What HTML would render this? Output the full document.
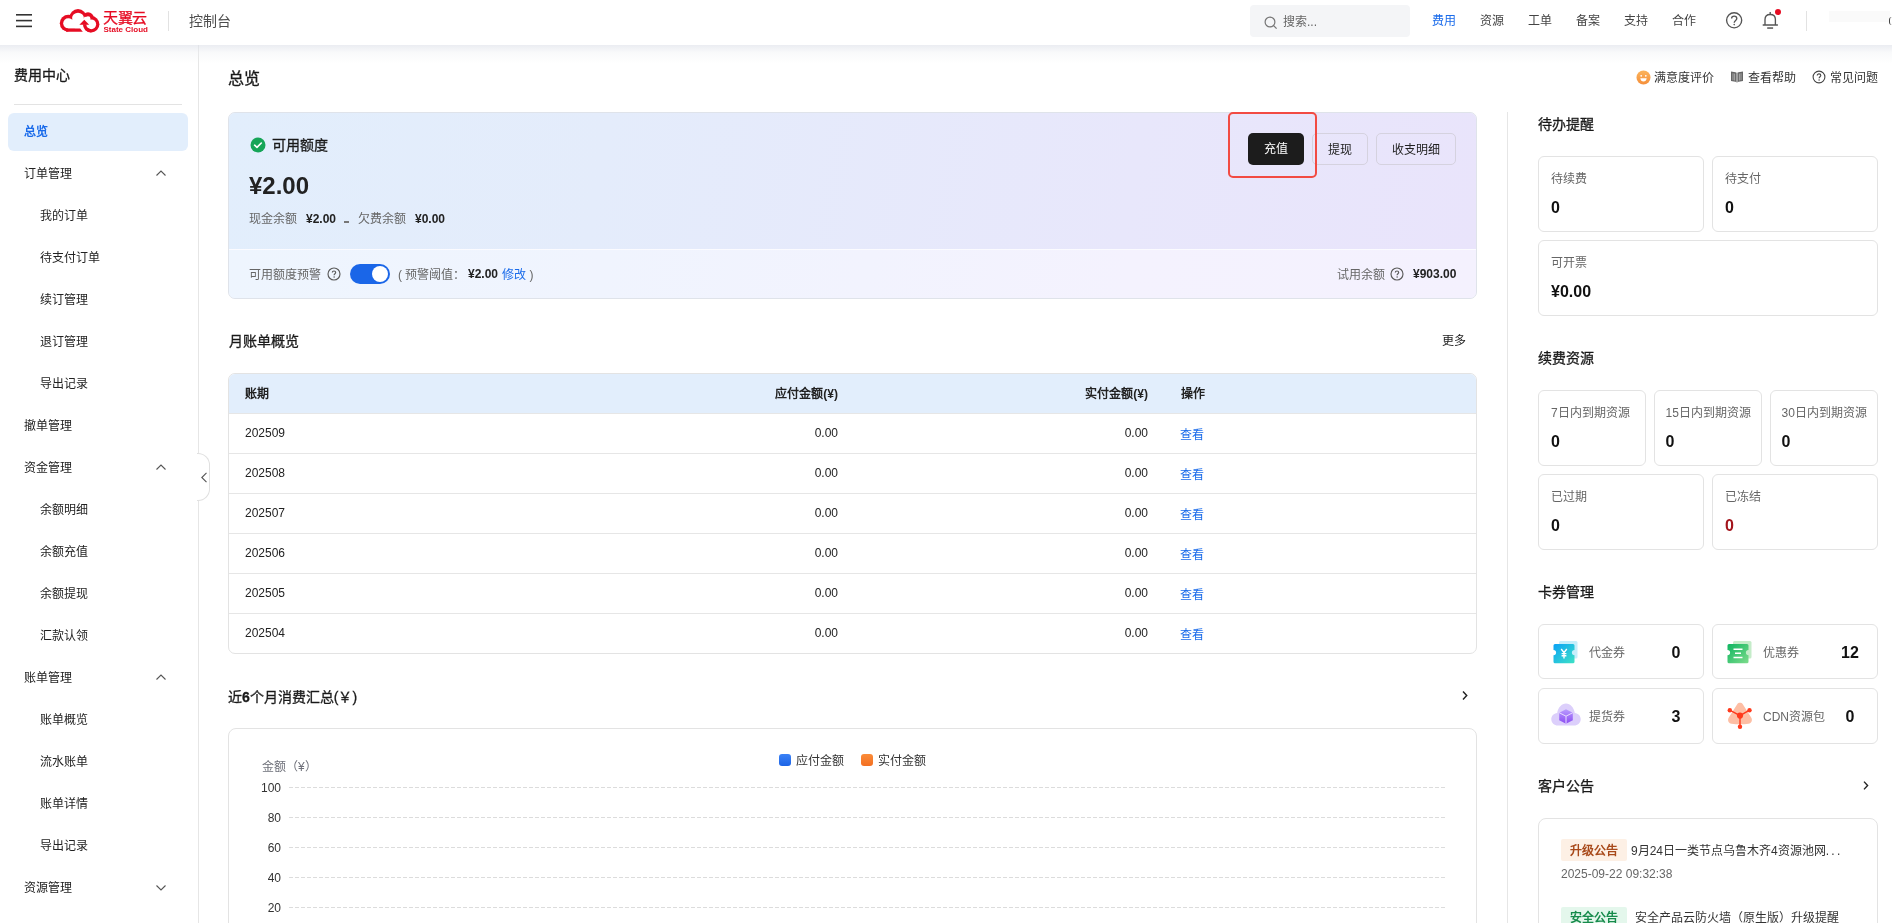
<!DOCTYPE html>
<html lang="zh-CN">
<head>
<meta charset="utf-8">
<style>
*{box-sizing:border-box;margin:0;padding:0}
html,body{width:1892px;height:923px;overflow:hidden;background:#fff}
body{will-change:transform}
body{font-family:"Liberation Sans",sans-serif;font-size:12px;color:#222;position:relative}
.a{position:absolute;white-space:nowrap}
.t{line-height:20px;height:20px}
.b{font-weight:bold}
/* header */
#hdr{position:absolute;left:0;top:0;width:1892px;height:45px;background:#fff;z-index:5}
#shd{position:absolute;left:0;top:45px;width:1892px;height:19px;background:linear-gradient(rgba(222,225,233,.62),rgba(236,238,242,.32) 40%,rgba(255,255,255,0));z-index:4}
.nav{color:#444;font-size:12px}
/* sidebar */
#side{position:absolute;left:0;top:45px;width:199px;height:878px;border-right:1px solid #e6e6e6;background:#fff}
.mi{position:absolute;left:24px;font-size:12px;color:#222;line-height:20px;height:20px}
.sub{left:40px}
.chev{position:absolute;left:156px;width:10px;height:6px}
/* main */
.h14{font-size:14px;font-weight:500;-webkit-text-stroke:0.3px #1a1a1a;color:#1a1a1a;line-height:20px;height:20px}
.card{position:absolute;border:1px solid #e3e3e3;border-radius:6px;background:#fff}
.lbl{color:#666;font-size:12px}
.num{font-size:16px;font-weight:bold;color:#111}
.row{position:absolute;left:0;width:1247px;height:40px;border-top:1px solid #e6e6e6}
.cell{position:absolute;line-height:20px;height:20px;top:9px;font-size:12px;color:#222}
.link{color:#1a6bea}
.grid{position:absolute;left:289px;width:1156px;height:1px;background-image:linear-gradient(to right,#dcdcdc 0,#dcdcdc 4px,transparent 4px,transparent 6px);background-size:6px 1px}
.yl{position:absolute;width:40px;text-align:right;left:241px;font-size:12px;color:#333;line-height:16px;height:16px}
</style>
</head>
<body>
<!-- HEADER -->
<div id="hdr">
  <svg class="a" style="left:16px;top:13px" width="16" height="15" viewBox="0 0 16 15">
    <rect x="0" y="1" width="16" height="1.6" fill="#333"/>
    <rect x="0" y="6.8" width="16" height="1.6" fill="#333"/>
    <rect x="0" y="12.6" width="16" height="1.6" fill="#333"/>
  </svg>
  <!-- logo -->
  <svg class="a" style="left:56px;top:6px" width="46" height="30" viewBox="56 6 46 30">
    <g fill="#e60c23">
      <circle cx="68.3" cy="23.3" r="8.5"/><circle cx="78" cy="17.8" r="8.7"/><circle cx="88" cy="18" r="5.8"/><circle cx="91.2" cy="24.3" r="8.2"/>
    </g>
    <g fill="#fff">
      <circle cx="68.3" cy="23.3" r="5.1"/><ellipse cx="78" cy="17.9" rx="5.9" ry="5.2"/><circle cx="88" cy="18.6" r="2.4"/><path d="M82 21 L84.6 16.8 L88.5 17.2 L90.5 19.6 L89 27 L80 27Z"/><circle cx="91.2" cy="24.3" r="4.9"/>
      <rect x="68.3" y="19.5" width="20" height="9"/>
      <rect x="68.3" y="28.4" width="16" height="6"/>
    </g>
    <path d="M66 28.4 H80.2 L82.8 31.8 H66Z" fill="#e60c23"/>
    <path d="M91.2 30.9 A6.6 6.6 0 0 1 84.6 24.3" fill="none" stroke="#e60c23" stroke-width="3.4"/>
    <path d="M79.4 24.8 L84.3 19.8 L89.2 24.8Z" fill="#e60c23"/>
  </svg>
  <div class="a" style="left:103px;top:8px;font-size:15px;line-height:20px;color:#e60c23;font-weight:500;-webkit-text-stroke:0.25px #e60c23;letter-spacing:-0.3px">天翼云</div>
  <div class="a" style="left:103.5px;top:26px;font-size:8px;line-height:8px;color:#e60c23;font-weight:bold">State Cloud</div>
  <div class="a" style="left:168px;top:11px;width:1px;height:20px;background:#e2e2e2"></div>
  <div class="a" style="left:189px;top:11px;font-size:14px;line-height:20px;color:#4d4d4d">控制台</div>

  <div class="a" style="left:1250px;top:5px;width:160px;height:32px;background:#f4f5f7;border-radius:4px"></div>
  <svg class="a" style="left:1263.5px;top:15.5px" width="14" height="14" viewBox="0 0 14 14"><circle cx="6" cy="6" r="4.9" fill="none" stroke="#777" stroke-width="1.2"/><path d="M9.6 9.6 L12.6 12.6" stroke="#777" stroke-width="1.3"/></svg>
  <div class="a nav t" style="left:1283px;top:12px;color:#666">搜索...</div>

  <div class="a nav t" style="left:1432px;top:11px;color:#1a6bea">费用</div>
  <div class="a nav t" style="left:1480px;top:11px">资源</div>
  <div class="a nav t" style="left:1528px;top:11px">工单</div>
  <div class="a nav t" style="left:1576px;top:11px">备案</div>
  <div class="a nav t" style="left:1624px;top:11px">支持</div>
  <div class="a nav t" style="left:1672px;top:11px">合作</div>
  <svg class="a" style="left:1720px;top:4px" width="70" height="32" viewBox="1720 4 70 32">
    <g fill="none" stroke="#555" stroke-width="1.35">
      <circle cx="1734.15" cy="20.3" r="7.55"/>
      <path d="M1731.6 18.6 C1731.6 17 1732.7 16.1 1734.2 16.1 C1735.7 16.1 1736.8 17.1 1736.8 18.4 C1736.8 20.4 1734.2 20.5 1734.2 22.8"/>
      <path d="M1765 25 V19.6 C1765 16.3 1767.3 14.5 1770.2 14.5 C1773.1 14.5 1775.4 16.3 1775.4 19.6 V25"/>
      <path d="M1762.7 25 H1777.9" stroke-width="1.5"/>
      <path d="M1770.2 12 V14.4"/>
      <path d="M1767.2 28.05 H1773.1" stroke-width="1.5"/>
    </g>
    <circle cx="1734.2" cy="24.6" r="0.8" fill="#555"/>
    <circle cx="1778" cy="12" r="3" fill="#e60c23"/>
  </svg>
  <div class="a" style="left:1806px;top:11px;width:1px;height:20px;background:#e2e2e2"></div>
  <div class="a" style="left:1829px;top:11px;width:61px;height:11px;background:#fafafa"></div>
  <div class="a" style="left:1889px;top:17px;width:3px;height:8px;border-left:1.5px solid #444;border-radius:3px 0 0 3px"></div>
</div>

<div id="shd"></div>
<!-- SIDEBAR -->
<div id="side">
  <div class="a" style="left:14px;top:20px;font-size:14px;font-weight:500;-webkit-text-stroke:0.3px #1a1a1a;line-height:20px;color:#1a1a1a">费用中心</div>
  <div class="a" style="left:14px;top:59px;width:168px;height:1px;background:#e3e3e3"></div>
  <div class="a" style="left:8px;top:68px;width:180px;height:38px;background:#e2eefc;border-radius:6px"></div>
  <div class="mi b" style="top:77px;color:#1a6bea">总览</div>
  <div class="mi" style="top:119px">订单管理</div>
  <div class="mi sub" style="top:161px">我的订单</div>
  <div class="mi sub" style="top:203px">待支付订单</div>
  <div class="mi sub" style="top:245px">续订管理</div>
  <div class="mi sub" style="top:287px">退订管理</div>
  <div class="mi sub" style="top:329px">导出记录</div>
  <div class="mi" style="top:371px">撤单管理</div>
  <div class="mi" style="top:413px">资金管理</div>
  <div class="mi sub" style="top:455px">余额明细</div>
  <div class="mi sub" style="top:497px">余额充值</div>
  <div class="mi sub" style="top:539px">余额提现</div>
  <div class="mi sub" style="top:581px">汇款认领</div>
  <div class="mi" style="top:623px">账单管理</div>
  <div class="mi sub" style="top:665px">账单概览</div>
  <div class="mi sub" style="top:707px">流水账单</div>
  <div class="mi sub" style="top:749px">账单详情</div>
  <div class="mi sub" style="top:791px">导出记录</div>
  <div class="mi" style="top:833px">资源管理</div>
  <svg class="chev" style="top:125px" viewBox="0 0 10 6"><path d="M0.5 5.5 L5 1 L9.5 5.5" fill="none" stroke="#555" stroke-width="1.1"/></svg>
  <svg class="chev" style="top:419px" viewBox="0 0 10 6"><path d="M0.5 5.5 L5 1 L9.5 5.5" fill="none" stroke="#555" stroke-width="1.1"/></svg>
  <svg class="chev" style="top:629px" viewBox="0 0 10 6"><path d="M0.5 5.5 L5 1 L9.5 5.5" fill="none" stroke="#555" stroke-width="1.1"/></svg>
  <svg class="chev" style="top:840px" viewBox="0 0 10 6"><path d="M0.5 0.5 L5 5 L9.5 0.5" fill="none" stroke="#555" stroke-width="1.1"/></svg>
</div>
<!-- collapse tab -->
<div class="a" style="left:197px;top:453px;width:13px;height:48px;background:#fff;border:1px solid #e0e0e0;border-left:none;border-radius:0 12px 12px 0"></div>
<svg class="a" style="left:200px;top:472px" width="8" height="11" viewBox="0 0 8 11"><path d="M6.5 0.8 L1.8 5.5 L6.5 10.2" fill="none" stroke="#555" stroke-width="1.1"/></svg>

<!-- MAIN -->
<div id="main">
  <div class="a" style="left:228px;top:68px;font-size:16px;font-weight:500;-webkit-text-stroke:0.35px #1a1a1a;line-height:22px;color:#1a1a1a">总览</div>
  <!-- top right links -->
  <svg class="a" style="left:1635.5px;top:69.5px" width="15" height="15" viewBox="0 0 15 15"><defs><linearGradient id="sm" x1="0" y1="0" x2="0" y2="1"><stop offset="0" stop-color="#fbb45c"/><stop offset="1" stop-color="#f58f3a"/></linearGradient></defs><circle cx="7.5" cy="7.5" r="7" fill="url(#sm)"/><circle cx="5.2" cy="5.8" r="0.9" fill="#fff"/><circle cx="9.8" cy="5.8" r="0.9" fill="#fff"/><path d="M4.3 8.3 H10.7 C10.5 10.3 9.2 11.6 7.5 11.6 C5.8 11.6 4.5 10.3 4.3 8.3Z" fill="#fff"/></svg>
  <div class="a t" style="left:1654px;top:68px;color:#333">满意度评价</div>
  <svg class="a" style="left:1730px;top:70px" width="14" height="13" viewBox="0 0 14 13"><path d="M1 1.5 L5.5 2.3 L7 3 L8.5 2.3 L13 1.5 V11 L8.5 11.8 L7 12.5 L5.5 11.8 L1 11Z" fill="#666"/><path d="M7 3 V12.3" stroke="#fff" stroke-width="0.8"/><path d="M3 3.3 V10.2 M4.6 3.6 V10.5 M9.4 3.6 V10.5 M11 3.3 V10.2" stroke="#eee" stroke-width="0.5"/></svg>
  <div class="a t" style="left:1748px;top:68px;color:#333">查看帮助</div>
  <svg class="a" style="left:1812px;top:70px" width="14" height="14" viewBox="0 0 14 14"><circle cx="7" cy="7" r="5.9" fill="none" stroke="#444" stroke-width="1.1"/><path d="M5.2 5.6 C5.2 4.5 6 3.9 7 3.9 C8 3.9 8.8 4.6 8.8 5.5 C8.8 6.7 7.1 6.8 7.1 8.3" fill="none" stroke="#444" stroke-width="1.1"/><circle cx="7.1" cy="10" r="0.7" fill="#444"/></svg>
  <div class="a t" style="left:1830px;top:68px;color:#333">常见问题</div>

  <!-- balance card -->
  <div class="a" style="left:228px;top:112px;width:1249px;height:187px;border:1px solid #dfe3ea;border-radius:7px;overflow:hidden;background:#f1f3fd">
    <div class="a" style="left:0;top:0;width:1247px;height:136px;background:linear-gradient(100deg,#e2eefc 0%,#e4ecfb 30%,#e8e7fb 72%,#e9e4fb 100%)"></div>
    <div class="a" style="left:0;top:136px;width:1247px;height:1px;background:#fbfbff"></div><div class="a" style="left:0;top:137px;width:1247px;height:48px;background:linear-gradient(100deg,#eef5fe 0%,#f0f4fe 30%,#f4f2fe 72%,#f4f1fe 100%)"></div>
  </div>
  <svg class="a" style="left:250px;top:137px" width="16" height="16" viewBox="0 0 16 16"><circle cx="8" cy="8" r="7.5" fill="#16a558"/><path d="M4.6 8.2 L7 10.4 L11.3 6" fill="none" stroke="#fff" stroke-width="1.6" stroke-linecap="round" stroke-linejoin="round"/></svg>
  <div class="a" style="left:272px;top:135px;font-size:14px;font-weight:500;-webkit-text-stroke:0.3px #1a1a1a;line-height:20px;color:#1a1a1a">可用额度</div>
  <div class="a b" style="left:249px;top:172px;font-size:24px;line-height:28px;color:#222">¥2.00</div>
  <div class="a t lbl" style="left:249px;top:209px">现金余额</div>
  <div class="a t b" style="left:306px;top:209px;color:#222">¥2.00</div>
  <div class="a" style="left:344px;top:221px;width:5px;height:2px;background:#777"></div>
  <div class="a t lbl" style="left:358px;top:209px">欠费余额</div>
  <div class="a t b" style="left:415px;top:209px;color:#222">¥0.00</div>

  <div class="a" style="left:1248px;top:133px;width:56px;height:32px;background:#1c1c1c;border-radius:5px;color:#fff;font-size:12px;font-weight:500;line-height:33px;text-align:center">充值</div>
  <div class="a" style="left:1312px;top:133px;width:56px;height:32px;border:1px solid #d5d2df;border-radius:5px;color:#222;font-size:12px;line-height:32px;text-align:center">提现</div>
  <div class="a" style="left:1376px;top:133px;width:80px;height:32px;border:1px solid #d5d2df;border-radius:5px;color:#222;font-size:12px;line-height:32px;text-align:center">收支明细</div>
  <div class="a" style="left:1227.5px;top:112px;width:89.5px;height:65.5px;border:2.8px solid #f24b43;border-radius:5px"></div>

  <div class="a t lbl" style="left:249px;top:265px">可用额度预警</div>
  <svg class="a" style="left:327px;top:267px" width="14" height="14" viewBox="0 0 14 14"><circle cx="7" cy="7" r="6" fill="none" stroke="#5a5a5a" stroke-width="1.15"/><path d="M5.3 5.6 C5.3 4.6 6 4 7 4 C8 4 8.7 4.7 8.7 5.5 C8.7 6.7 7.1 6.8 7.1 8.2" fill="none" stroke="#5a5a5a" stroke-width="1.15"/><circle cx="7.1" cy="9.9" r="0.75" fill="#5a5a5a"/></svg>
  <div class="a" style="left:350px;top:264px;width:40px;height:20px;border-radius:10px;background:#1a66e8"></div>
  <div class="a" style="left:371.6px;top:265.6px;width:16.4px;height:16.4px;border-radius:50%;background:#fff"></div>
  <div class="a t lbl" style="left:398px;top:265px">(&nbsp;预警阈值：</div>
  <div class="a t b" style="left:468px;top:264px;color:#222">¥2.00</div>
  <div class="a t link" style="left:502px;top:265px">修改</div>
  <div class="a t lbl" style="left:529.5px;top:265px">)</div>

  <div class="a t lbl" style="left:1337px;top:265px">试用余额</div>
  <svg class="a" style="left:1390px;top:267px" width="14" height="14" viewBox="0 0 14 14"><circle cx="7" cy="7" r="6" fill="none" stroke="#5a5a5a" stroke-width="1.15"/><path d="M5.3 5.6 C5.3 4.6 6 4 7 4 C8 4 8.7 4.7 8.7 5.5 C8.7 6.7 7.1 6.8 7.1 8.2" fill="none" stroke="#5a5a5a" stroke-width="1.15"/><circle cx="7.1" cy="9.9" r="0.75" fill="#5a5a5a"/></svg>
  <div class="a t b" style="left:1413px;top:264px;color:#222">¥903.00</div>

  <!-- monthly bills -->
  <div class="a h14" style="left:229px;top:331px">月账单概览</div>
  <div class="a t" style="left:1442px;top:331px;color:#222">更多</div>
  <div class="a" style="left:228px;top:373px;width:1249px;height:281px;border:1px solid #e3e3e3;border-radius:7px;overflow:hidden;background:#fff">
    <div class="a" style="left:0;top:0;width:1247px;height:39px;background:#e2eefc"></div>
    <div class="cell b" style="left:16px;top:10px">账期</div>
    <div class="cell b" style="left:399px;top:10px;width:210px;text-align:right">应付金额(¥)</div>
    <div class="cell b" style="left:709px;top:10px;width:210px;text-align:right">实付金额(¥)</div>
    <div class="cell b" style="left:952px;top:10px">操作</div>
    <div class="row" style="top:39px"><div class="cell" style="left:16px">202509</div><div class="cell" style="left:399px;width:210px;text-align:right">0.00</div><div class="cell" style="left:709px;width:210px;text-align:right">0.00</div><div class="cell link" style="left:951px;top:11px">查看</div></div>
    <div class="row" style="top:79px"><div class="cell" style="left:16px">202508</div><div class="cell" style="left:399px;width:210px;text-align:right">0.00</div><div class="cell" style="left:709px;width:210px;text-align:right">0.00</div><div class="cell link" style="left:951px;top:11px">查看</div></div>
    <div class="row" style="top:119px"><div class="cell" style="left:16px">202507</div><div class="cell" style="left:399px;width:210px;text-align:right">0.00</div><div class="cell" style="left:709px;width:210px;text-align:right">0.00</div><div class="cell link" style="left:951px;top:11px">查看</div></div>
    <div class="row" style="top:159px"><div class="cell" style="left:16px">202506</div><div class="cell" style="left:399px;width:210px;text-align:right">0.00</div><div class="cell" style="left:709px;width:210px;text-align:right">0.00</div><div class="cell link" style="left:951px;top:11px">查看</div></div>
    <div class="row" style="top:199px"><div class="cell" style="left:16px">202505</div><div class="cell" style="left:399px;width:210px;text-align:right">0.00</div><div class="cell" style="left:709px;width:210px;text-align:right">0.00</div><div class="cell link" style="left:951px;top:11px">查看</div></div>
    <div class="row" style="top:239px"><div class="cell" style="left:16px">202504</div><div class="cell" style="left:399px;width:210px;text-align:right">0.00</div><div class="cell" style="left:709px;width:210px;text-align:right">0.00</div><div class="cell link" style="left:951px;top:11px">查看</div></div>
    
  </div>

  <!-- chart -->
  <div class="a h14" style="left:228px;top:687px">近<b>6</b>个月消费汇总(￥)</div>
  <svg class="a" style="left:1461px;top:690px" width="8" height="11" viewBox="0 0 8 11"><path d="M2 1.6 L5.7 5.5 L2 9.4" fill="none" stroke="#222" stroke-width="1.45"/></svg>
  <div class="a" style="left:228px;top:728px;width:1249px;height:260px;border:1px solid #e3e3e3;border-radius:8px;background:#fff"></div>
  <div class="a" style="left:779px;top:754px;width:12px;height:12px;border-radius:3px;background:linear-gradient(#3b82f6,#1d64e6)"></div>
  <div class="a t" style="left:796px;top:751px;color:#333">应付金额</div>
  <div class="a" style="left:861px;top:754px;width:12px;height:12px;border-radius:3px;background:linear-gradient(#fb8c38,#f36f22)"></div>
  <div class="a t" style="left:878px;top:751px;color:#333">实付金额</div>
  <div class="a t" style="left:262px;top:757px;color:#6e7079">金额（¥）</div>
  <div class="yl" style="top:780px">100</div><div class="grid" style="top:787px"></div>
  <div class="yl" style="top:810px">80</div><div class="grid" style="top:817px"></div>
  <div class="yl" style="top:840px">60</div><div class="grid" style="top:847px"></div>
  <div class="yl" style="top:870px">40</div><div class="grid" style="top:877px"></div>
  <div class="yl" style="top:900px">20</div><div class="grid" style="top:907px"></div>
</div>
<!-- RIGHT -->
<div id="right">
  <div class="a" style="left:1507px;top:112px;width:1px;height:811px;background:#e6e6e6"></div>
  <div class="a h14" style="left:1538px;top:114px">待办提醒</div>
  <div class="card" style="left:1538px;top:156px;width:166px;height:76px"></div>
  <div class="a t lbl" style="left:1551px;top:169px">待续费</div>
  <div class="a b" style="left:1551px;top:198px;font-size:16px;line-height:20px;color:#111">0</div>
  <div class="card" style="left:1712px;top:156px;width:166px;height:76px"></div>
  <div class="a t lbl" style="left:1725px;top:169px">待支付</div>
  <div class="a b" style="left:1725px;top:198px;font-size:16px;line-height:20px;color:#111">0</div>
  <div class="card" style="left:1538px;top:240px;width:340px;height:76px"></div>
  <div class="a t lbl" style="left:1551px;top:253px">可开票</div>
  <div class="a b" style="left:1551px;top:282px;font-size:16px;line-height:20px;color:#111">¥0.00</div>
  <div class="a h14" style="left:1538px;top:348px">续费资源</div>
  <div class="card" style="left:1538px;top:390px;width:108px;height:76px"></div>
  <div class="a t lbl" style="left:1551px;top:403px">7日内到期资源</div>
  <div class="a b" style="left:1551px;top:432px;font-size:16px;line-height:20px;color:#111">0</div>
  <div class="card" style="left:1654px;top:390px;width:108px;height:76px"></div>
  <div class="a t lbl" style="left:1665.5px;top:403px">15日内到期资源</div>
  <div class="a b" style="left:1665.5px;top:432px;font-size:16px;line-height:20px;color:#111">0</div>
  <div class="card" style="left:1770px;top:390px;width:108px;height:76px"></div>
  <div class="a t lbl" style="left:1781.5px;top:403px">30日内到期资源</div>
  <div class="a b" style="left:1781.5px;top:432px;font-size:16px;line-height:20px;color:#111">0</div>
  <div class="card" style="left:1538px;top:474px;width:166px;height:76px"></div>
  <div class="a t lbl" style="left:1551px;top:487px">已过期</div>
  <div class="a b" style="left:1551px;top:516px;font-size:16px;line-height:20px;color:#111">0</div>
  <div class="card" style="left:1712px;top:474px;width:166px;height:76px"></div>
  <div class="a t lbl" style="left:1725px;top:487px">已冻结</div>
  <div class="a b" style="left:1725px;top:516px;font-size:16px;line-height:20px;color:#a3141c">0</div>
  <div class="a h14" style="left:1538px;top:582px">卡券管理</div>
  <div class="card" style="left:1538px;top:624px;width:166px;height:55px"></div>
  <svg class="a" style="left:1553px;top:640px" width="26" height="24" viewBox="0 0 26 24"><defs><linearGradient id="g1" x1="0" y1="0" x2="1" y2="1"><stop offset="0" stop-color="#0aa2f7"/><stop offset="1" stop-color="#3fe2c5"/></linearGradient></defs><rect x="6" y="1" width="18.5" height="17.5" rx="1.5" fill="#c6eefb"/><path d="M2 4 H20 A1.5 1.5 0 0 1 21.5 5.5 V10 A2.6 2.6 0 0 0 21.5 15.2 V21.8 A1.5 1.5 0 0 1 20 23.3 H2 A1.5 1.5 0 0 1 0.5 21.8 V15.2 A2.6 2.6 0 0 0 0.5 10 V5.5 A1.5 1.5 0 0 1 2 4Z" fill="url(#g1)"/><path d="M8.2 9 L11 12.6 L13.8 9 M11 12.6 V18.5 M8.6 13.6 H13.4 M8.6 15.8 H13.4" fill="none" stroke="#fff" stroke-width="1.4"/></svg>
  <div class="a t lbl" style="left:1589px;top:643px">代金券</div>
  <div class="a b" style="left:1656px;top:643px;width:40px;text-align:center;font-size:16px;line-height:20px;color:#111">0</div>
  <div class="card" style="left:1712px;top:624px;width:166px;height:55px"></div>
  <svg class="a" style="left:1727px;top:640px" width="26" height="24" viewBox="0 0 26 24"><defs><linearGradient id="g2" x1="0" y1="0" x2="1" y2="1"><stop offset="0" stop-color="#0db560"/><stop offset="1" stop-color="#7fdc8c"/></linearGradient></defs><rect x="6" y="1" width="18.5" height="17.5" rx="1.5" fill="#c5ecc9"/><path d="M2 4 H20 A1.5 1.5 0 0 1 21.5 5.5 V10 A2.6 2.6 0 0 0 21.5 15.2 V21.8 A1.5 1.5 0 0 1 20 23.3 H2 A1.5 1.5 0 0 1 0.5 21.8 V15.2 A2.6 2.6 0 0 0 0.5 10 V5.5 A1.5 1.5 0 0 1 2 4Z" fill="url(#g2)"/><path d="M6.5 9.2 H15.5 M8 13.3 H14 M6.5 17.4 H15.5" fill="none" stroke="#fff" stroke-width="1.5"/></svg>
  <div class="a t lbl" style="left:1763px;top:643px">优惠券</div>
  <div class="a b" style="left:1830px;top:643px;width:40px;text-align:center;font-size:16px;line-height:20px;color:#111">12</div>
  <div class="card" style="left:1538px;top:688px;width:166px;height:56px"></div>
  <svg class="a" style="left:1551px;top:703px" width="30" height="23" viewBox="0 0 30 23"><defs><linearGradient id="g3" x1="0" y1="0" x2="0" y2="1"><stop offset="0" stop-color="#b99cff"/><stop offset="1" stop-color="#8b4cf2"/></linearGradient></defs><path d="M7 22.5 C3.2 22.5 0.3 19.8 0.3 16.2 C0.3 12.9 2.8 10.3 6.2 10 C7 4.6 10.8 0.5 15 0.5 C19.2 0.5 23 4.6 23.8 10 C27.2 10.3 29.7 12.9 29.7 16.2 C29.7 19.8 26.8 22.5 23 22.5Z" fill="#dccffb"/><path d="M15 6.2 L21.8 9.7 V17.3 L15 20.8 L8.2 17.3 V9.7Z" fill="url(#g3)"/><path d="M8.2 9.7 L15 13.2 L21.8 9.7 M15 13.2 V20.8" fill="none" stroke="#e9ddff" stroke-width="1"/></svg>
  <div class="a t lbl" style="left:1589px;top:707px">提货券</div>
  <div class="a b" style="left:1656px;top:707px;width:40px;text-align:center;font-size:16px;line-height:20px;color:#111">3</div>
  <div class="card" style="left:1712px;top:688px;width:166px;height:56px"></div>
  <svg class="a" style="left:1727px;top:702px" width="26" height="27" viewBox="0 0 26 27"><path d="M10.2 2.2 C11.5 0.4 14.5 0.4 15.8 2.2 L24.2 15.5 C25.8 18 24.6 21.5 21.5 21.8 C15.8 22.5 10.2 22.5 4.5 21.8 C1.4 21.5 0.2 18 1.8 15.5Z" fill="#fdbea4"/><path d="M2.8 8.2 L13 13.6 L22.5 8.2 M13 13.6 V24.8" fill="none" stroke="#ff3a1c" stroke-width="1.4"/><circle cx="13" cy="13.6" r="3.1" fill="#ff3a1c"/><circle cx="2.8" cy="8.2" r="2.2" fill="#ff3a1c"/><circle cx="22.5" cy="8.2" r="2.2" fill="#ff3a1c"/><circle cx="13" cy="24.8" r="2.2" fill="#ff3a1c"/></svg>
  <div class="a t lbl" style="left:1763px;top:707px">CDN资源包</div>
  <div class="a b" style="left:1830px;top:707px;width:40px;text-align:center;font-size:16px;line-height:20px;color:#111">0</div>
  <div class="a h14" style="left:1538px;top:776px">客户公告</div>
  <svg class="a" style="left:1862px;top:780px" width="8" height="11" viewBox="0 0 8 11"><path d="M2 1.6 L5.6 5.5 L2 9.4" fill="none" stroke="#222" stroke-width="1.4"/></svg>
  <div class="card" style="left:1538px;top:818px;width:340px;height:200px;border-radius:8px"></div>
  <div class="a b" style="left:1561px;top:839px;width:66px;height:22px;padding-top:1px;background:#fdf0e5;color:#a8491a;border-radius:2px;text-align:center;line-height:22px;font-size:12px">升级公告</div>
  <div class="a t" style="left:1631px;top:841px;color:#333">9月24日一类节点乌鲁木齐4资源池网<span style="letter-spacing:2.3px">...</span></div>
  <div class="a t" style="left:1561px;top:864px;color:#666">2025-09-22 09:32:38</div>
  <div class="a b" style="left:1561px;top:907px;width:66px;height:22px;background:#e4f7ec;color:#168b4b;border-radius:2px;text-align:center;line-height:22px;font-size:12px">安全公告</div>
  <div class="a t" style="left:1635px;top:908px;color:#333">安全产品云防火墙（原生版）升级提醒</div>
</div>
</body>
</html>
